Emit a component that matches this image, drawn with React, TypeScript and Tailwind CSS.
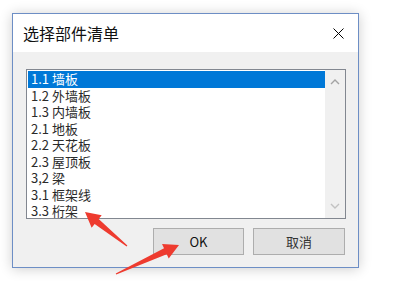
const items = [
  "1.1 墙板",
  "1.2 外墙板",
  "1.3 内墙板",
  "2.1 地板",
  "2.2 天花板",
  "2.3 屋顶板",
  "3,2 梁",
  "3.1 框架线",
  "3.3 桁架",
];

function arrow(tx: number, ty: number, hx: number, hy: number) {
  const dx = hx - tx;
  const dy = hy - ty;
  const len = Math.hypot(dx, dy);
  const ux = dx / len;
  const uy = dy / len;
  const nx = -uy;
  const ny = ux;
  const headLen = 15;
  const headW = 8;
  const shaftW = 3.2;
  const bx = hx - ux * headLen;
  const by = hy - uy * headLen;
  const pts = [
    [tx + nx * 0.6, ty + ny * 0.6],
    [bx + nx * shaftW, by + ny * shaftW],
    [bx + nx * headW, by + ny * headW],
    [hx, hy],
    [bx - nx * headW, by - ny * headW],
    [bx - nx * shaftW, by - ny * shaftW],
    [tx - nx * 0.6, ty - ny * 0.6],
  ];
  return pts.map((p) => p.join(",")).join(" ");
}

export default function App() {
  return (
    <div className="relative h-[281px] w-[397px] overflow-hidden bg-white pl-[12px] pt-[13px] font-['Microsoft_YaHei','Noto_Sans_CJK_SC',sans-serif]">
      {/* Dialog */}
      <div className="flex h-[255px] w-[347px] flex-col border border-[#6d8ec5] bg-[#f0f0f0] shadow-[0_1px_12px_rgba(0,0,0,0.2)]">
        {/* Title bar */}
        <div className="flex h-[38px] items-center justify-between bg-white pl-[10px] pr-[14px]">
          <span className="text-[16px] leading-none text-[#111]">选择部件清单</span>
          <svg width="11" height="11" viewBox="0 0 11 11" className="mt-[1px]">
            <path d="M0.5 0.5 L10.5 10.5 M10.5 0.5 L0.5 10.5" stroke="#000" strokeWidth="1" />
          </svg>
        </div>

        {/* Body */}
        <div className="flex flex-1 flex-col pl-[13px] pt-[17px]">
          {/* List box */}
          <div className="flex h-[150px] w-[320px] border border-[#828790] bg-white">
            <div className="flex-1 pt-[1px] pl-[1px]">
              {items.map((t, i) => (
                <div
                  key={t}
                  className={
                    i === 0
                      ? "h-[16.5px] bg-[#0078d7] pl-[3px] text-[13px] leading-[16.5px] text-white"
                      : "h-[16.5px] pl-[3px] text-[13px] leading-[16.5px] text-[#2a2a2a]"
                  }
                >
                  {t}
                </div>
              ))}
            </div>
            {/* Scrollbar */}
            <div className="flex w-[20px] flex-col items-center justify-between bg-[#f0f0f0] py-[9px]">
              <svg width="10" height="6" viewBox="0 0 10 6">
                <path d="M1 5 L5 1 L9 5" stroke="#a3a3a3" strokeWidth="1.4" fill="none" />
              </svg>
              <svg width="10" height="6" viewBox="0 0 10 6">
                <path d="M1 1 L5 5 L9 1" stroke="#c2c2c2" strokeWidth="1.4" fill="none" />
              </svg>
            </div>
          </div>

          {/* Buttons */}
          <div className="mt-[9px] flex gap-[9px] pl-[127px]">
            <button className="flex h-[27px] w-[91px] items-center justify-center border border-[#adadad] bg-[#e1e1e1] text-[13px] font-normal text-[#111]">
              OK
            </button>
            <button className="flex h-[27px] w-[92px] items-center justify-center border border-[#adadad] bg-[#e1e1e1] text-[13px] font-normal text-[#333]">
              取消
            </button>
          </div>
        </div>
      </div>

      {/* Annotation arrows */}
      <svg className="pointer-events-none absolute left-0 top-0" width="397" height="281">
        <polygon points={arrow(127, 246, 85, 212)} fill="#ee3b2f" />
        <polygon points={arrow(116, 274, 179, 245)} fill="#ee3b2f" />
      </svg>
    </div>
  );
}
